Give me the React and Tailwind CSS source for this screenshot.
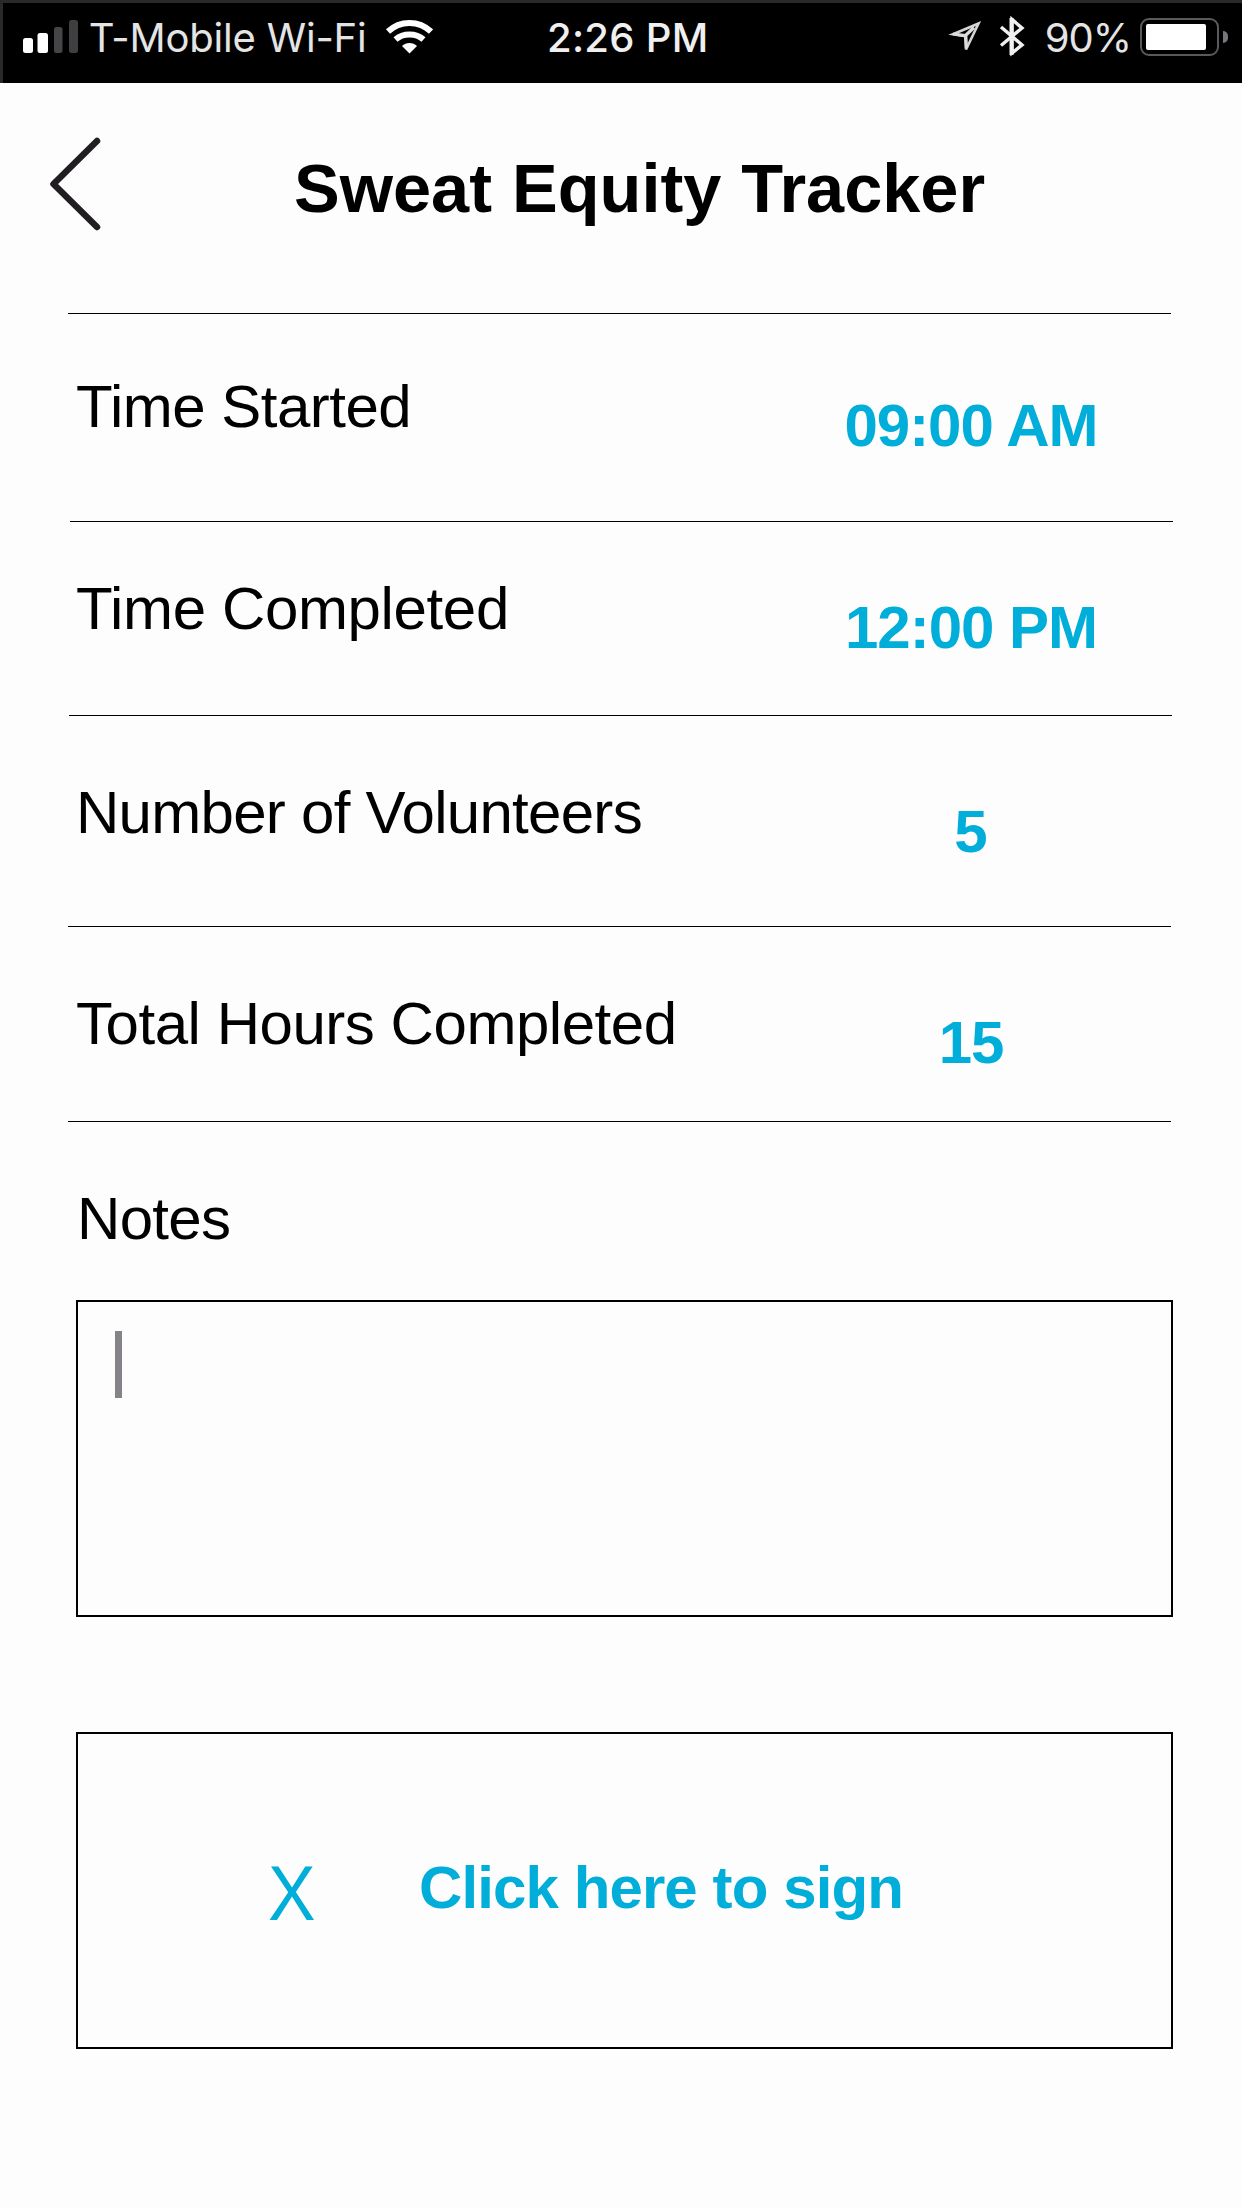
import React from "react";

const rows = [
  { label: "Time Started", value: "09:00 AM", row: "h-[208px]", line: "ml-[68px]", pad: "pt-[63px]", ls: "tracking-[-0.5px]", vls: "tracking-[-1px]" },
  { label: "Time Completed", value: "12:00 PM", row: "h-[194px]", line: "ml-[70px]", pad: "pt-[57px]", ls: "tracking-[-0.36px]", vls: "tracking-[-1px]" },
  { label: "Number of Volunteers", value: "5", row: "h-[211px]", line: "ml-[69px]", pad: "pt-[67px]", ls: "tracking-[-0.72px]", vls: "tracking-normal" },
  { label: "Total Hours Completed", value: "15", row: "h-[195px]", line: "ml-[68px]", pad: "pt-[67px]", ls: "tracking-[-0.46px]", vls: "tracking-[-1px]" },
];

function Signal() {
  return (
    <svg className="ml-5 h-[83px] w-[62px] shrink-0" viewBox="23 0 62 83">
      <rect x="26" y="38" width="10" height="15" rx="2.5" fill="#fff" transform="translate(-3 0)" />
      <rect x="37.5" y="33" width="10.5" height="20" rx="2.5" fill="#fff" />
      <rect x="54" y="27" width="8.500" height="26" rx="2.500" fill="#454447" />
      <rect x="69" y="20" width="9" height="33" rx="2.500" fill="#3f3e41" />
    </svg>
  );
}

function Wifi() {
  return (
    <svg className="h-[83px] w-[48px] shrink-0" viewBox="385 0 48 83" fill="none">
      <path d="M388 31.5C400 20 419 20 431 31.5" stroke="#fff" strokeWidth="6" />
      <path d="M395.5 39.5C403 32.8 416 32.8 423.5 39.5" stroke="#fff" strokeWidth="6" />
      <path d="M402 46C406 42 413 42 417 46L409.500 53.500Z" fill="#fff" />
    </svg>
  );
}

function StatusIcons() {
  return (
    <svg className="h-[83px] w-[80px] shrink-0" viewBox="946 0 80 83" fill="none">
      <path d="M978.5 23.500L953 34.200L965.300 36.200L966 49.500Z" stroke="#d4d4d4" strokeWidth="2.6" />
      <path d="M953 34L965.500 35.500L974 27.500M965.800 36L966.500 48" stroke="#dcdcdc" strokeWidth="3.200" />
      <path d="M1001 27L1022 45L1012 53V19.5L1022 28L1001 45.5" stroke="#f0f0f0" strokeWidth="3.4" />
      <path d="M1011.500 18V55" stroke="#f0f0f0" strokeWidth="4" />
    </svg>
  );
}

function Battery() {
  return (
    <div className="ml-[10px] mt-[18px] flex shrink-0 items-center self-start">
      <div className="h-[38px] w-[79px] rounded-[9px] border-[2.5px] border-[#5a595c] p-1">
        <div className="h-[26px] w-[60px] rounded-[2px] bg-white" />
      </div>
      <div className="ml-1 h-3 w-[5px] rounded-r-full bg-[#77767a]" />
    </div>
  );
}

function StatusBar() {
  return (
    <div className="flex h-[83px] items-start whitespace-nowrap border-l-[3px] border-t-[3px] border-[#29282b] bg-black font-['Inter',sans-serif] text-[40px] leading-[40px] text-[#e4e4e4]">
      <div className="-mt-[3px] flex h-[83px] items-start">
        <Signal />
        <span className="ml-[3.7px] mt-[18px] w-[296.3px] tracking-[-0.2px]">T-Mobile Wi-Fi</span>
        <Wifi />
        <span className="ml-[114px] mt-[18px] w-[399px] font-medium tracking-[0.3px] text-[#f0f0f0]">2:26 PM</span>
        <StatusIcons />
        <span className="ml-[18.7px] mt-[18px] w-[85px] tracking-[-1px]">90%</span>
        <Battery />
      </div>
    </div>
  );
}

export default function App() {
  return (
    <div className="h-[2208px] w-[1242px] overflow-hidden bg-[#fdfdfd] font-['Liberation_Sans',Arial,sans-serif] text-[60px] leading-[60px] text-black">
      <StatusBar />
      <header className="flex h-[230px] items-start">
        <button className="ml-[46px] mt-[51px]" aria-label="Back">
          <svg className="h-[100px] w-[60px]" viewBox="46 134 60 100" fill="none">
            <path d="M97 141L53.5 184L97 227" stroke="#201e21" strokeWidth="6.5" strokeLinecap="round" strokeLinejoin="round" />
          </svg>
        </button>
        <h1 className="ml-[188px] mt-[66px] whitespace-nowrap text-[68.5px] font-bold leading-[80px] [word-spacing:1px]">Sweat Equity Tracker</h1>
      </header>

      {rows.map((r) => (
        <section key={r.label} className={r.row}>
          <hr className={`w-[1103px] border-t border-black ${r.line}`} />
          <div className={`flex whitespace-nowrap pl-[76px] ${r.pad}`}>
            <span className={`w-[695px] ${r.ls}`}>{r.label}</span>
            <span className={`mt-[19px] w-[400px] text-center font-bold text-[#00aed9] ${r.vls}`}>{r.value}</span>
          </div>
        </section>
      ))}

      <hr className="ml-[68px] w-[1103px] border-t border-black" />
      <label className="block pl-[77px] pt-[67px] tracking-[-0.7px]">Notes</label>
      <div className="ml-[76px] mt-[51px] h-[317px] w-[1097px] border-2 border-black pl-[37px] pt-[29px]">
        <div className="h-[67px] w-[7px] bg-[#858387]" />
      </div>

      <button className="ml-[76px] mt-[115px] flex h-[317px] w-[1097px] items-start whitespace-nowrap border-2 border-black text-[#00aed9]">
        <span className="ml-[190px] mt-[119px] w-[151px] origin-left scale-x-[0.92] text-left text-[77.5px] leading-[80px]">X</span>
        <span className="mt-[124px] font-bold tracking-[-0.9px]">Click here to sign</span>
      </button>
    </div>
  );
}
